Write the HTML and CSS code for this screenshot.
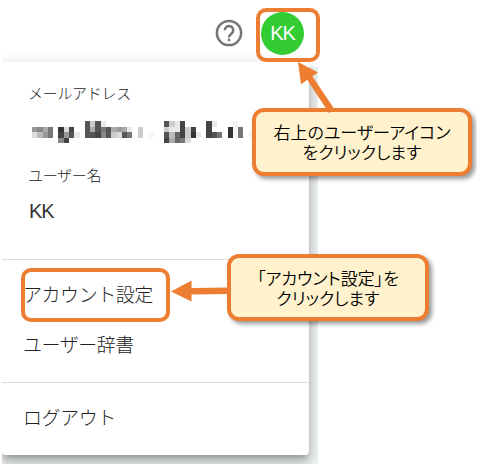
FILE: index.html
```html
<!DOCTYPE html>
<html lang="ja">
<head>
<meta charset="utf-8">
<title>アカウント設定</title>
<link rel="stylesheet" href="styles.css">
</head>
<body>
<div class="app">
  <header class="topbar">
    <svg class="help" viewBox="0 0 28 28" width="28" height="28" fill="none" stroke="#757575" stroke-width="2.5">
      <circle cx="14" cy="14" r="12.1"/>
      <path d="M9.800 11.200a4.200 4.200 0 1 1 7.200 2.900c-1.700 1.600-3 2.200-3 4.400"/>
      <path d="M14 19.700v2.500"/>
    </svg>
    <div class="avatar">KK</div>
  </header>
  <div class="menu">
    <section class="profile">
      <div class="label">メールアドレス</div>
      <svg class="mosaic" width="222" height="22" viewBox="0 0 42 4" preserveAspectRatio="none" shape-rendering="crispEdges"></svg>
      <div class="label name-label">ユーザー名</div>
      <div class="username">KK</div>
    </section>
    <nav class="group settings">
      <div class="item">アカウント設定</div>
      <div class="item dictionary">ユーザー辞書</div>
    </nav>
    <nav class="group logout">
      <div class="item">ログアウト</div>
    </nav>
  </div>
</div>
<div class="frame frame-avatar"></div>
<div class="frame frame-account"></div>
<div class="callout callout-avatar">右上のユーザーアイコン<br>をクリックします</div>
<div class="callout callout-account">「アカウント設定」を<br>クリックします</div>
<svg class="arrows" width="477" height="466" viewBox="0 0 477 466">
  <path d="M298 62L318 72.500L312.300 76.200L335 110L329 113L307.200 79.800L301 84.500Z"/>
  <path d="M171 291.500L191.500 280.500V288L230 287.500V294L191.500 294.500V301.500Z"/>
</svg>
<script src="mosaic.js"></script>
</body>
</html>
```
FILE: mosaic.js
```js
// Each character is the grey level of one cell; a dot leaves it empty.
const rows = [
  "..........5c5e...........5ce4....4e...f",
  "98a7.3d4..5a575a9ae.c....cee4c4..4...3f7",
  "db97.495e.55485cd57.c.f..5b64c3e.457.3f7.f",
  ".....84..................4a67d"
];
const colors = { f: "#f6f6f6", e: "#e9e9e9", d: "#dcdcdc" };
const canvas = document.querySelector(".mosaic");
rows.forEach((row, y) => [...row].forEach((level, x) => {
  if (level === ".") return;
  const cell = document.createElementNS("http://www.w3.org/2000/svg", "rect");
  cell.setAttribute("x", x);
  cell.setAttribute("y", y);
  cell.setAttribute("width", 1);
  cell.setAttribute("height", 1);
  cell.setAttribute("fill", colors[level] || "#" + level.repeat(3));
  canvas.append(cell);
}));
```
FILE: styles.css
```css
* { box-sizing: border-box; }
body {
  margin: 0;
  width: 477px;
  height: 466px;
  overflow: hidden;
  position: relative;
  background: #fff;
  font-family: "Noto Sans CJK JP", sans-serif;
  color: #222;
}
.app {
  width: 316px;
  height: 464px;
  margin-left: 2px;
  overflow: hidden;
  background: linear-gradient(#fff 67px, #edf1f0 67px);
}
.topbar {
  height: 62px;
  padding: 12px 14px 0 213px;
  display: flex;
  justify-content: space-between;
}
.help { margin-top: 7px; }
.avatar {
  width: 43px;
  height: 43px;
  border-radius: 50%;
  background: #33cc33;
  color: #fff;
  font: 20px/43px "Liberation Sans", sans-serif;
  letter-spacing: -1px;
  text-align: center;
}
.menu {
  width: 307px;
  height: 393px;
  background: #fff;
  border-radius: 4px;
  box-shadow: 0 5px 5px -3px rgba(0,0,0,.2), 0 8px 10px 1px rgba(0,0,0,.14), 0 3px 14px 2px rgba(0,0,0,.12);
}
.profile { height: 197px; padding: 20px 0 0 26px; }
.label {
  height: 22px;
  font-size: 15px;
  line-height: 22px;
  font-weight: 300;
  letter-spacing: -.3px;
  white-space: nowrap;
}
.mosaic { display: block; margin: 17px 0 0 4px; }
.name-label { margin-top: 21px; }
.username {
  margin: 13px 0 0 1px;
  color: #333;
  font: 20px/24px "Liberation Sans", sans-serif;
  letter-spacing: -1px;
}
.group { border-top: 1px solid #dedede; padding-left: 21px; }
.settings { height: 123px; padding-top: 19px; }
.logout { padding-top: 19px; }
.item {
  font-size: 19px;
  line-height: 30px;
  font-weight: 300;
  letter-spacing: -.45px;
  white-space: nowrap;
}
.dictionary { margin-top: 20px; }
.frame { position: absolute; border: 4px solid #ed7d31; border-radius: 10px; }
.frame-avatar { left: 256px; top: 8px; width: 64px; height: 54px; }
.frame-account { left: 21px; top: 268px; width: 149px; height: 54px; }
.arrows { position: absolute; left: 0; top: 0; fill: #ed7d31; }
.callout {
  position: absolute;
  padding-top: 10px;
  border: 4px solid #ed7d31;
  border-radius: 12px;
  background: #fff2cc;
  box-shadow: 3px 3px 4px rgba(0,0,0,.4);
  color: #000;
  font-size: 17px;
  font-weight: 350;
  font-feature-settings: "palt";
  line-height: 20px;
  text-align: center;
  white-space: nowrap;
}
.callout-avatar { left: 252px; top: 108px; width: 220px; height: 68px; }
.callout-account { left: 227px; top: 254px; width: 202px; height: 67px; }
```
